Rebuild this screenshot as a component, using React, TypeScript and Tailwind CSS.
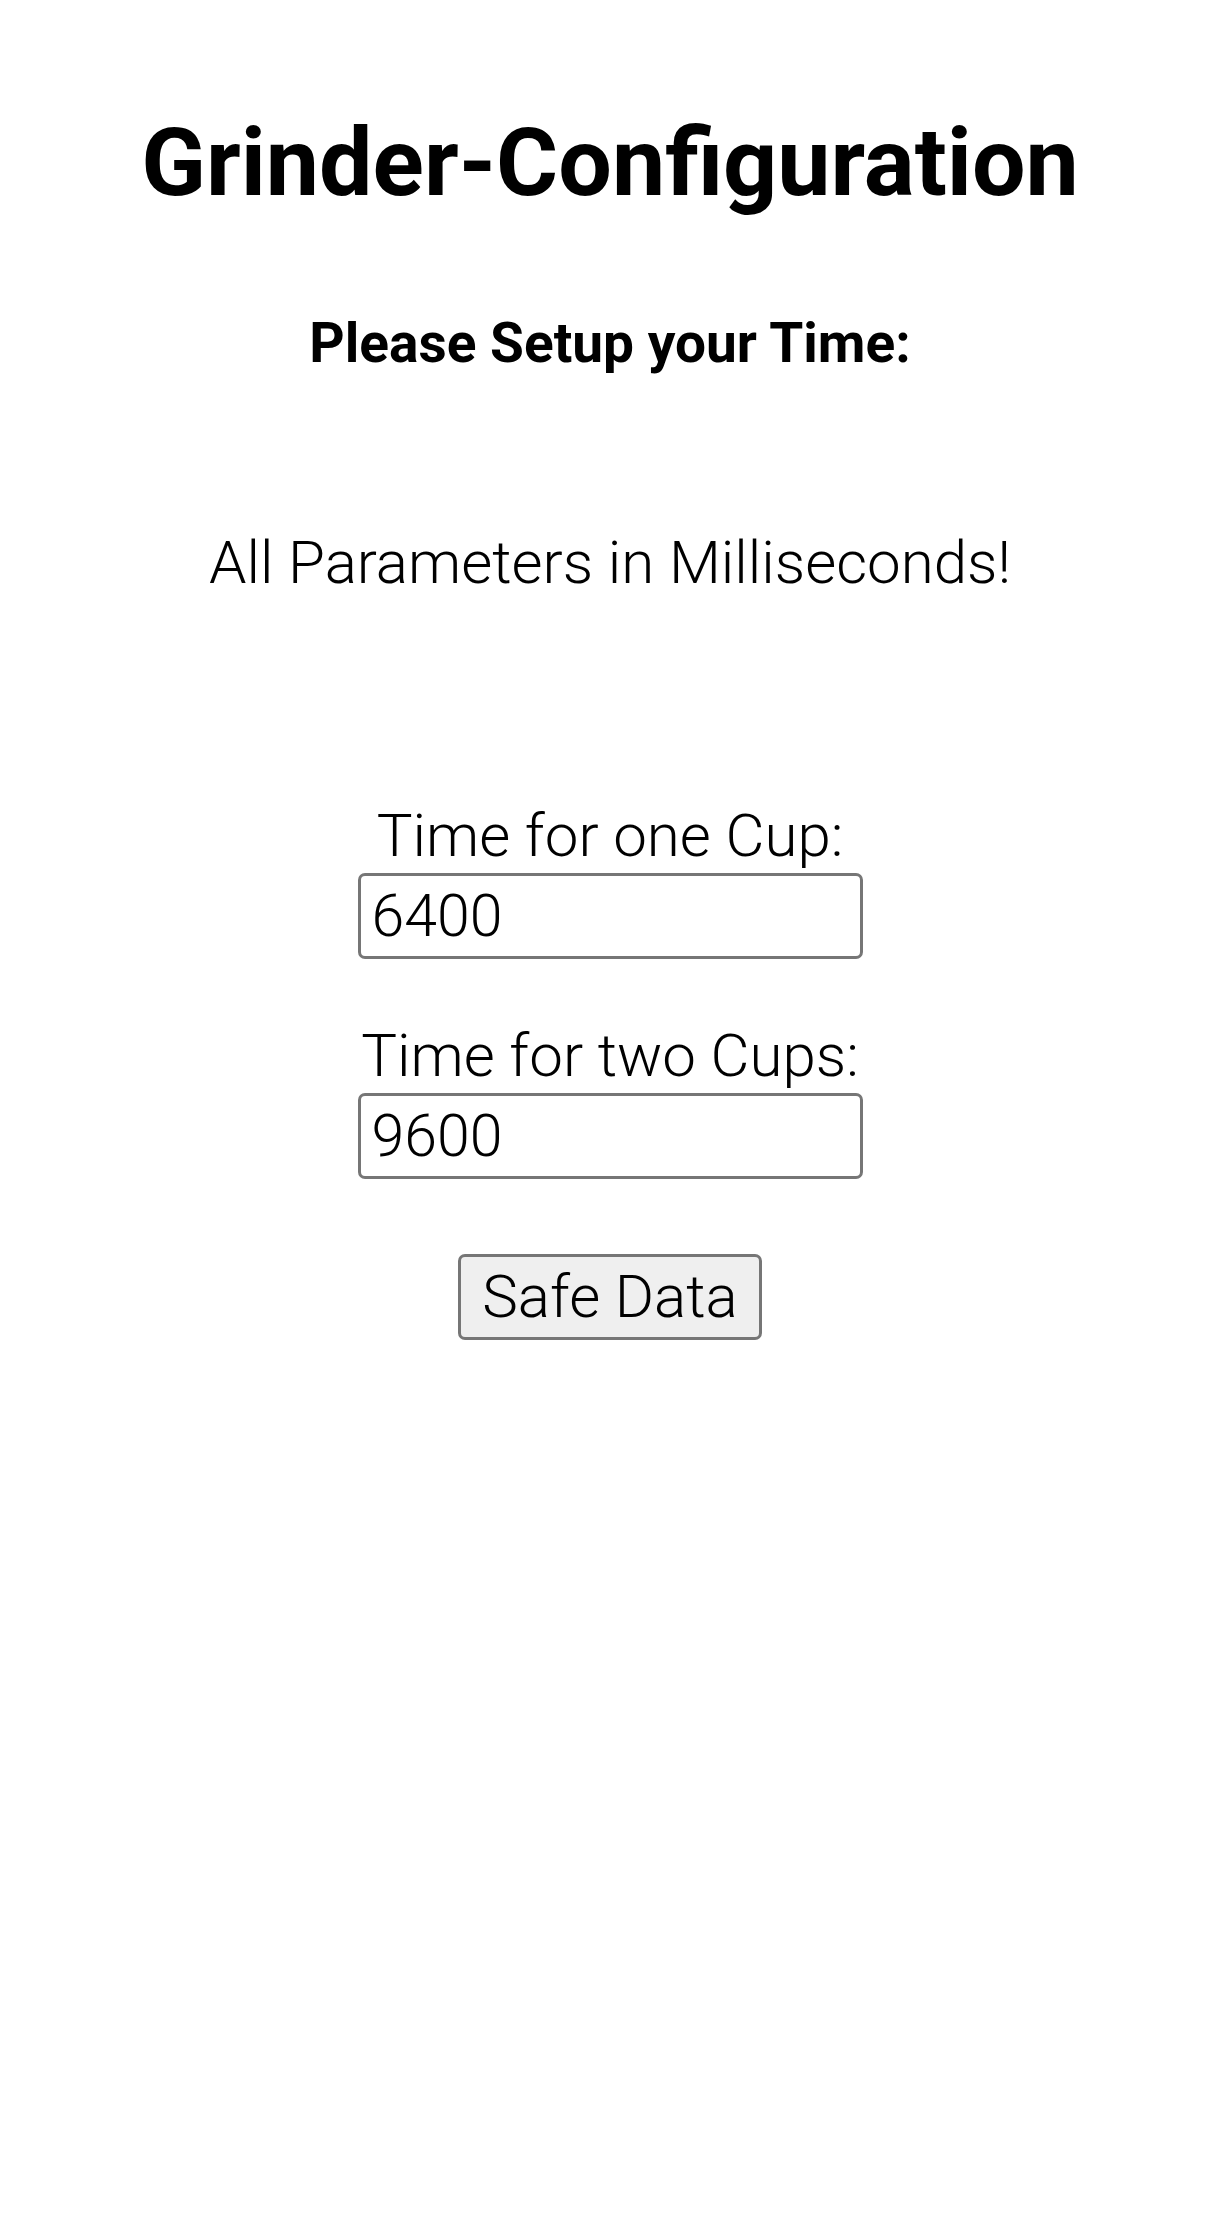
import React from "react";

export default function App() {
  return (
    <div className="min-h-[2218px] w-full bg-white text-black font-['Roboto',sans-serif] flex flex-col items-center">
      <h1 className="mt-[115px] text-[95px] leading-none font-bold text-center">Grinder-Configuration</h1>
      <h3 className="mt-[106px] text-[55px] leading-none font-bold text-center">Please Setup your Time:</h3>
      <p className="mt-[162px] text-[60px] leading-none font-light text-center">All Parameters in Milliseconds!</p>
      <form className="mt-[213px] flex flex-col items-center" onSubmit={(e) => e.preventDefault()}>
        <label className="text-[60px] leading-none font-light text-center">Time for one Cup:</label>
        <input
          type="text"
          defaultValue="6400"
          className="mt-[7px] w-[505px] h-[86px] border-[3px] border-[#767676] rounded-[7px] px-[11px] text-[59px] font-light text-black bg-white outline-none"
        />
        <label className="mt-[67px] text-[60px] leading-none font-light text-center">Time for two Cups:</label>
        <input
          type="text"
          defaultValue="9600"
          className="mt-[7px] w-[505px] h-[86px] border-[3px] border-[#767676] rounded-[7px] px-[11px] text-[59px] font-light text-black bg-white outline-none"
        />
        <button
          type="submit"
          className="mt-[75px] w-[304px] h-[86px] border-[3px] border-[#767676] rounded-[7px] bg-[#efefef] text-[60px] font-light text-black leading-none"
        >
          Safe Data
        </button>
      </form>
    </div>
  );
}
